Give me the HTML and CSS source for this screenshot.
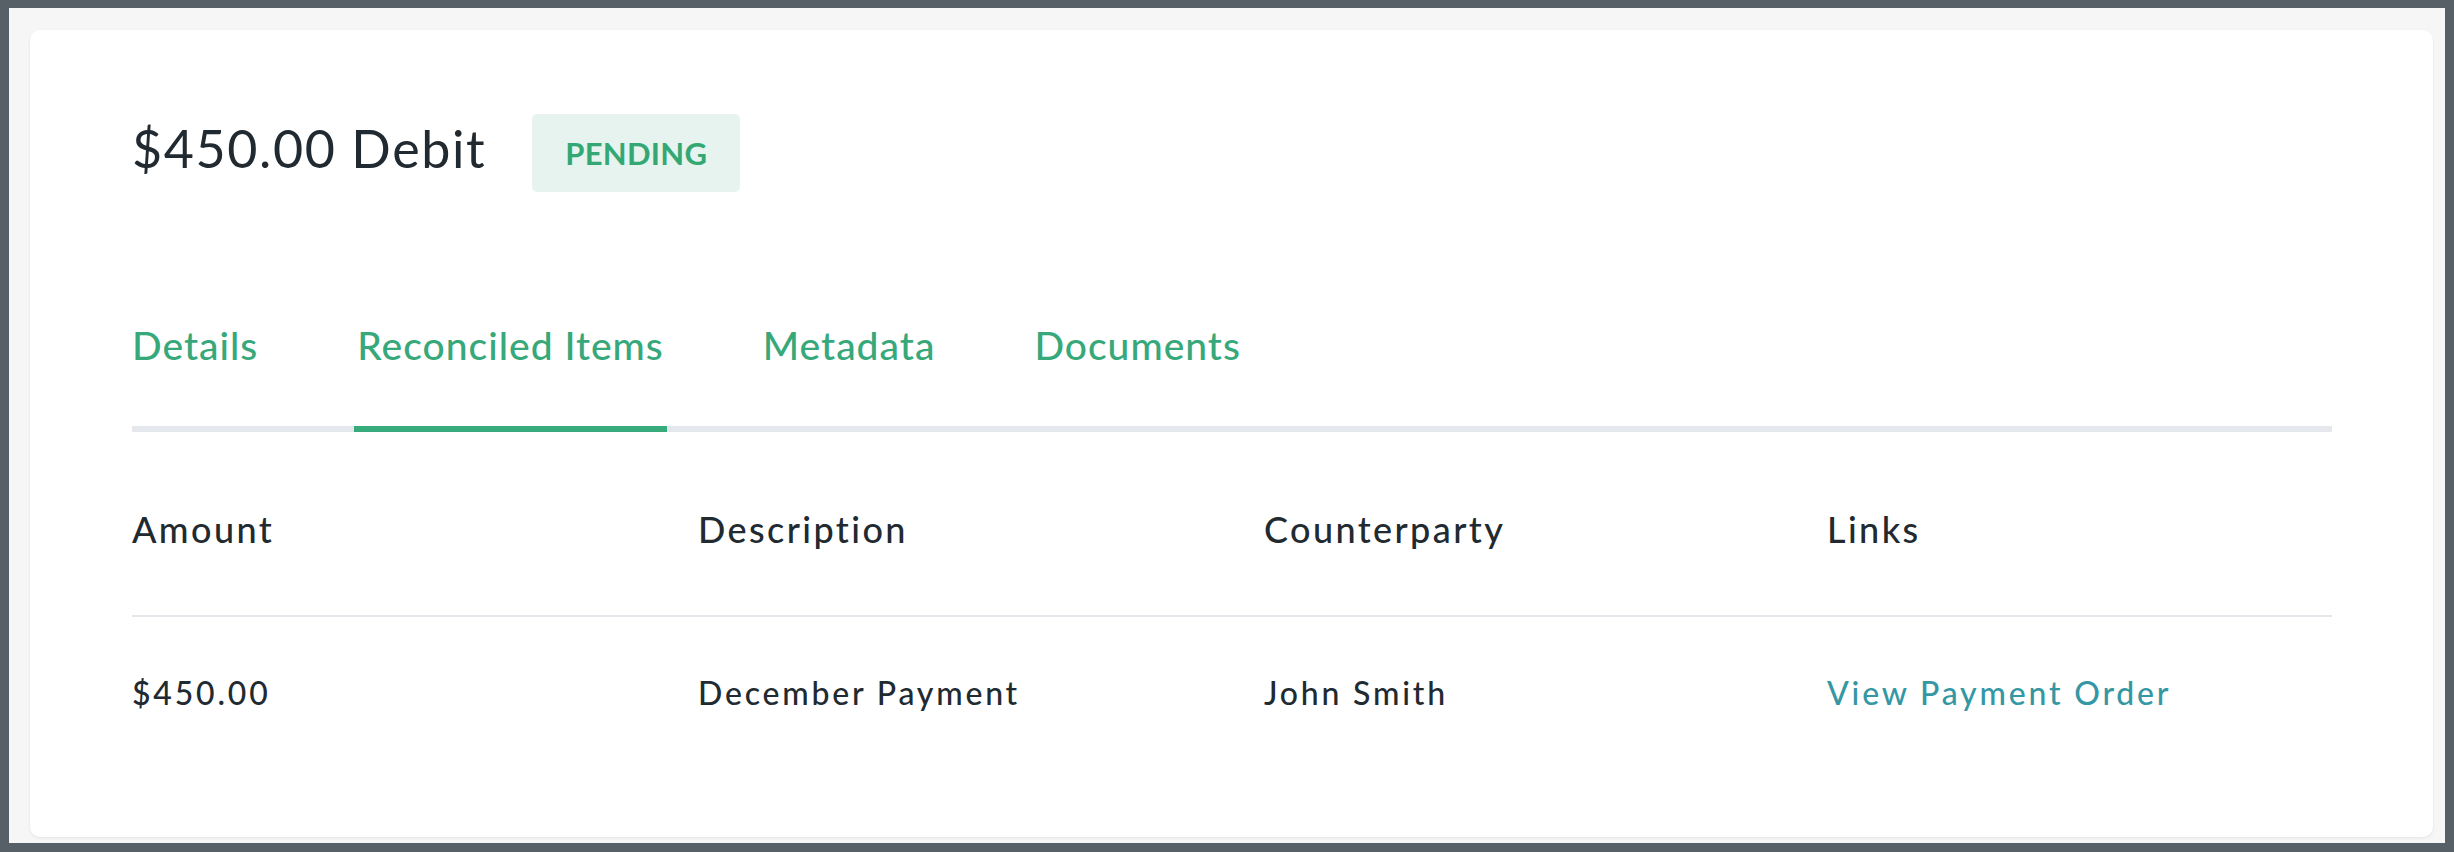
FILE: index.html
```html
<!DOCTYPE html>
<html lang="en">
<head>
<meta charset="utf-8">
<title>$450.00 Debit</title>
<link rel="stylesheet" href="styles.css">
</head>
<body>
<div class="frame">
  <div class="card">
    <div class="header">
      <h1 class="title">$450.00 Debit</h1>
      <span class="badge">PENDING</span>
    </div>
    <nav class="tabs">
      <a class="tab tab-first">Details</a>
      <a class="tab tab-active">Reconciled Items</a>
      <a class="tab">Metadata</a>
      <a class="tab">Documents</a>
    </nav>
    <div class="table">
      <div class="row row-head">
        <div class="cell">Amount</div>
        <div class="cell">Description</div>
        <div class="cell">Counterparty</div>
        <div class="cell">Links</div>
      </div>
      <div class="row row-body">
        <div class="cell">$450.00</div>
        <div class="cell">December Payment</div>
        <div class="cell">John Smith</div>
        <div class="cell"><a class="link">View Payment Order</a></div>
      </div>
    </div>
  </div>
</div>
</body>
</html>
```

FILE: styles.css
```css
* { box-sizing: border-box; }
html, body {
  margin: 0;
  padding: 0;
}
body {
  background: #586067;
  width: 2454px;
  height: 852px;
  padding: 8px 9px 9px 9px;
  font-family: "Lato", "Liberation Sans", sans-serif;
  color: #222a31;
}
.frame {
  background: #f6f6f6;
  height: 835px;
  padding: 22px 12px 6px 21px;
}
.card {
  background: #ffffff;
  border-radius: 10px;
  box-shadow: 0 1px 3px rgba(0, 0, 0, 0.08);
  padding: 84px 101px 124px 102px;
}
.header {
  display: flex;
  align-items: flex-start;
  height: 78px;
}
.title {
  margin: 0;
  font-size: 52px;
  font-weight: 400;
  line-height: 68px;
  letter-spacing: 1.6px;
  color: #222a31;
}
.badge {
  margin-left: 46px;
  width: 208px;
  height: 78px;
  border-radius: 5px;
  background: #e6f3ee;
  color: #34a874;
  font-weight: 700;
  font-size: 31px;
  letter-spacing: 0.3px;
  display: flex;
  align-items: center;
  justify-content: center;
}
.tabs {
  margin-top: 129px;
  display: flex;
  gap: 93px;
  border-bottom: 6px solid #e4e7eb;
}
.tab {
  font-size: 39px;
  line-height: 48px;
  font-weight: 500;
  letter-spacing: 1px;
  color: #36a87a;
  padding: 0 3px 57px;
  border-bottom: 6px solid transparent;
  margin-bottom: -6px;
}
.tab-first { margin-left: -3px; }
.tab-active { border-bottom-color: #38ab7d; }
.table { margin-top: 75px; }
.row {
  display: grid;
  grid-template-columns: 566px 566px 563px 1fr;
}
.row-head {
  font-size: 36px;
  line-height: 44px;
  font-weight: 500;
  letter-spacing: 2.4px;
  padding-bottom: 64px;
  border-bottom: 2px solid #e4e7eb;
}
.row-body {
  font-size: 32px;
  line-height: 40px;
  font-weight: 500;
  letter-spacing: 2.8px;
  padding-top: 56px;
}
.link { color: #3597a4; }
```
